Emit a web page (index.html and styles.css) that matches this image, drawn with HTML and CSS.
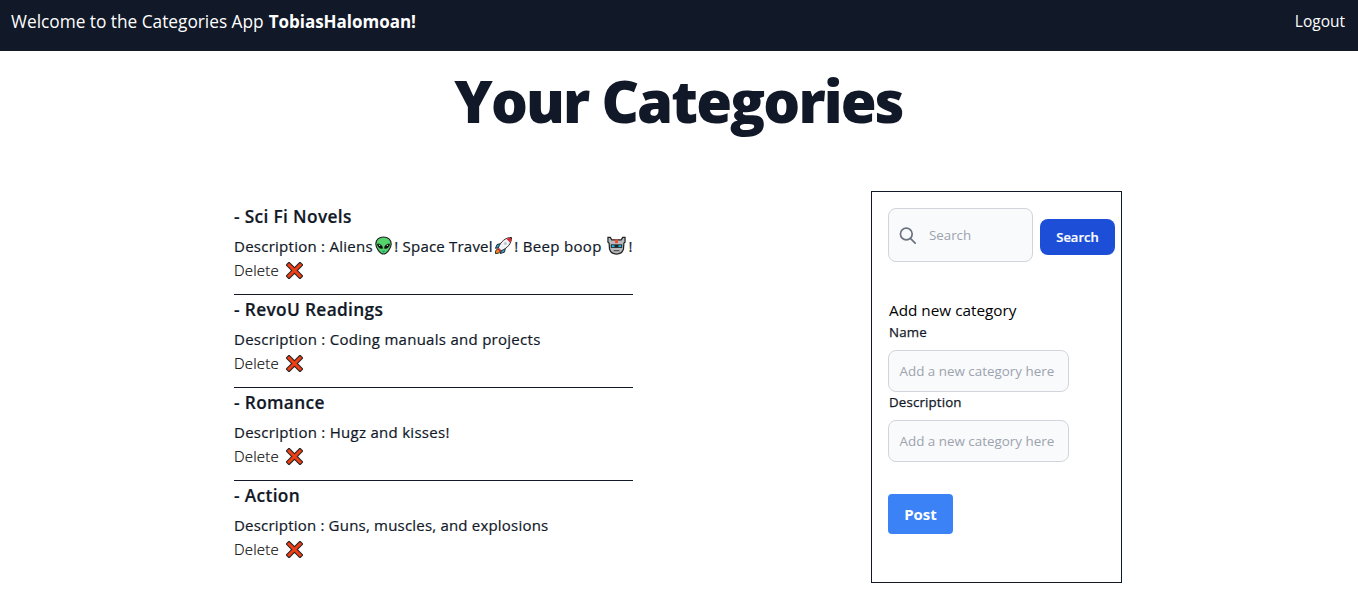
FILE: index.html
```html
<!DOCTYPE html>
<html lang="en">
<head>
<meta charset="utf-8">
<title>Categories App</title>
<link rel="stylesheet" href="styles.css">
</head>
<body>
<svg class="defs" width="0" height="0" aria-hidden="true">
  <symbol id="cross" viewBox="0 0 18 18"><path d="M3.2 3.2 14.8 14.8M14.8 3.2 3.2 14.8" stroke="#222" stroke-width="5.4" stroke-linecap="square" fill="none"/><path d="M3.2 3.2 14.8 14.8M14.8 3.2 3.2 14.8" stroke="#ee3e16" stroke-width="3.2" stroke-linecap="square" fill="none"/></symbol>
</svg>
<header class="bar">
  <p class="welcome"><span class="greeting">Welcome to the Categories App</span> <b class="user">TobiasHalomoan!</b></p>
  <a class="logout">Logout</a>
</header>
<h1 class="title">Your Categories</h1>
<main class="content">
  <ul class="list">
    <li class="item">
      <h2 class="name">- Sci Fi Novels</h2>
      <p class="desc"><span class="first">Description : Aliens</span><svg class="emoji" viewBox="0 0 20 20"><path d="M10 1C5.2 1 1.900 4 1.900 8.300c0 4.500 4.700 10.700 8.100 10.700s8.100-6.200 8.100-10.700C18.100 4 14.800 1 10 1Z" fill="#55d36c" stroke="#222" stroke-width="1.200"/><path d="M3.600 8.300c3.500.2 5.300 1.700 5.400 4.700-3.300.3-5.200-1.500-5.400-4.700ZM16.400 8.300c-3.500.2-5.300 1.700-5.400 4.700 3.300.3 5.200-1.500 5.400-4.700Z" fill="#111" stroke="#111" stroke-width=".6"/><path d="M8 15.500h4L10 17.500Z" fill="#159c83"/><path d="M5.500 10h1M13.500 10h1" stroke="#fff"/></svg><span class="travel">! Space Travel</span><svg class="emoji" viewBox="0 0 20 20"><path d="M7 8 3.200 9 1.500 13 6 12ZM12 13l-1 4-4.500 1.500L8 14Z" fill="#25a8e0" stroke="#222"/><path d="M4 13.500c-2 .5-2.500 3-2.500 5 2 0 4.500-.5 5-2.500Z" fill="#f58b1f" stroke="#222"/><path d="M18.500 1.500C12 1.500 7 6 4.500 12.500l3 3C14 13 18.500 8 18.500 1.500Z" fill="#f1f4f6" stroke="#222" stroke-width="1"/><path d="M18 2c-2 0-3.500.3-5 1l4 4c.7-1.500 1-3 1-5ZM4.500 12.500l3 3-1.500.8-2.300-2.300Z" fill="#e3202b"/><circle cx="12" cy="8" r="1.600" fill="#c2c9ce"/></svg><span class="beep">! Beep boop </span><svg class="emoji" viewBox="0 0 20 20"><path d="M1 1.500h2.500l1.500 2.500h10l1.500-2.500H19v5l-1.200 1-.5 6.500c-1 3-4 5-7.300 5s-6.300-2-7.300-5l-.5-6.500L1 6.500Z" fill="#b8bbbd" stroke="#222" stroke-width="1.300"/><path d="M8.500 3.500h3v4h-3Z" fill="#f34825"/><path d="M4 8.800h12v3.700H4Z" fill="#222"/><path d="M5 10.700h3M12 10.700h3" stroke="#11bfea" stroke-width="1.800"/><path d="M7 15.500h6" stroke="#333"/></svg><span>!</span></p>
      <p class="delete">Delete <svg class="x"><use href="#cross"/></svg></p>
    </li>
    <li class="item">
      <h2 class="name">- RevoU Readings</h2>
      <p class="desc">Description : Coding manuals and projects</p>
      <p class="delete">Delete <svg class="x"><use href="#cross"/></svg></p>
    </li>
    <li class="item">
      <h2 class="name">- Romance</h2>
      <p class="desc">Description : Hugz and kisses!</p>
      <p class="delete">Delete <svg class="x"><use href="#cross"/></svg></p>
    </li>
    <li class="item">
      <h2 class="name">- Action</h2>
      <p class="desc tight">Description : Guns, muscles, and explosions</p>
      <p class="delete">Delete <svg class="x"><use href="#cross"/></svg></p>
    </li>
  </ul>
  <aside class="panel">
    <form class="search">
      <div class="search-box"><svg class="glass" viewBox="0 0 20 20"><path d="m19 19-5-5m1.500-5.700A6.900 6.900 0 1 1 1.700 8.300a6.900 6.900 0 0 1 13.800 0Z" fill="none" stroke="#6b7280" stroke-width="2" stroke-linecap="round"/></svg><span>Search</span></div>
      <button class="search-button" type="button">Search</button>
    </form>
    <form class="add">
      <p class="add-title">Add new category</p>
      <label class="label">Name</label>
      <div class="field">Add a new category here</div>
      <label class="label">Description</label>
      <div class="field">Add a new category here</div>
      <button class="post" type="button">Post</button>
    </form>
  </aside>
</main>
</body>
</html>
```

FILE: styles.css
```css
* { box-sizing: border-box; margin: 0; padding: 0; }
body { font-family: "Open Sans", "Noto Sans", sans-serif; background: #fff; color: #111827; height: 595px; overflow: hidden; }
.defs { display: block; height: 0; }
.bar { display: flex; justify-content: space-between; height: 51px; padding: 8px 13px 0 11px; background: #111827; color: #fff; }
.welcome { display: flex; gap: 5px; font-size: 17.3px; line-height: 28px; white-space: nowrap; }
.greeting { letter-spacing: -0.01px; }
.user { font-size: 17px; font-weight: 700; letter-spacing: -0.02px; }
.logout { font-size: 15.5px; line-height: 27px; }
.title { height: 60px; margin-top: 20px; padding-right: 1px; text-align: center; font-size: 58px; line-height: 60px; font-weight: 800; letter-spacing: -1.9px; }
.content { display: flex; justify-content: space-between; align-items: flex-start; padding: 60px 236px 0 234px; }
.list { width: 399px; margin-top: 11px; list-style: none; }
.item { height: 93px; border-bottom: 1px solid #111827; }
.item:last-child { border-bottom: 0; }
.name { padding-top: 1px; font-size: 17.3px; line-height: 28px; font-weight: 600; letter-spacing: 0.35px; margin-bottom: 3px; -webkit-text-stroke: 0.2px; }
.desc { display: flex; font-size: 15px; line-height: 24px; letter-spacing: 0.28px; white-space: pre; -webkit-text-stroke: 0.2px; }
.tight { letter-spacing: 0.2px; }
.first { letter-spacing: 0.26px; }
.travel { letter-spacing: 0.2px; }
.beep { letter-spacing: 0.33px; }
.emoji { width: 19px; height: 19px; margin: 2px 1.5px 0 1px; flex: none; }
.desc span:last-child { padding-left: 1px; }
.delete { display: flex; gap: 7px; font-size: 15px; line-height: 24px; font-weight: 300; letter-spacing: 0.2px; color: #000; -webkit-text-stroke: 0.15px; }
.x { width: 17px; height: 17px; margin: 4px 0 0 0.5px; }
.x use { width: 17px; height: 17px; }
.panel { width: 251px; height: 392px; padding: 16px 6px 0 16px; border: 1px solid #111827; }
.search { display: flex; align-items: center; justify-content: space-between; }
.search-box { display: flex; align-items: center; gap: 13px; width: 145px; height: 54px; padding-left: 10px; border: 1px solid #d1d5db; border-radius: 8px; background: #f9fafb; color: #9ca3af; font-size: 13.3px; }
.glass { width: 17px; height: 17px; margin-top: 1px; }
.search-button { width: 75px; height: 36px; margin-top: 4px; border: 0; border-radius: 8px; background: #1d4ed8; color: #fff; font: 600 13px "Open Sans", sans-serif; -webkit-text-stroke: 0.2px; }
.add { display: flex; flex-direction: column; align-items: flex-start; padding-top: 36px; }
.add-title { padding-left: 1px; font-size: 15.3px; line-height: 24px; color: #000; }
.label { padding-left: 1px; font-size: 13.3px; line-height: 20px; letter-spacing: 0.15px; margin-bottom: 8px; -webkit-text-stroke: 0.25px; }
.field { width: 181px; height: 42px; padding-left: 10.5px; border: 1px solid #d1d5db; border-radius: 8px; background: #f9fafb; color: #9ca3af; font-size: 13.4px; line-height: 40px; white-space: nowrap; }
.post { width: 65px; height: 40px; margin-top: 32px; border: 0; border-radius: 4px; background: #3b82f6; color: #fff; font: 700 15px "Open Sans", sans-serif; }
```
